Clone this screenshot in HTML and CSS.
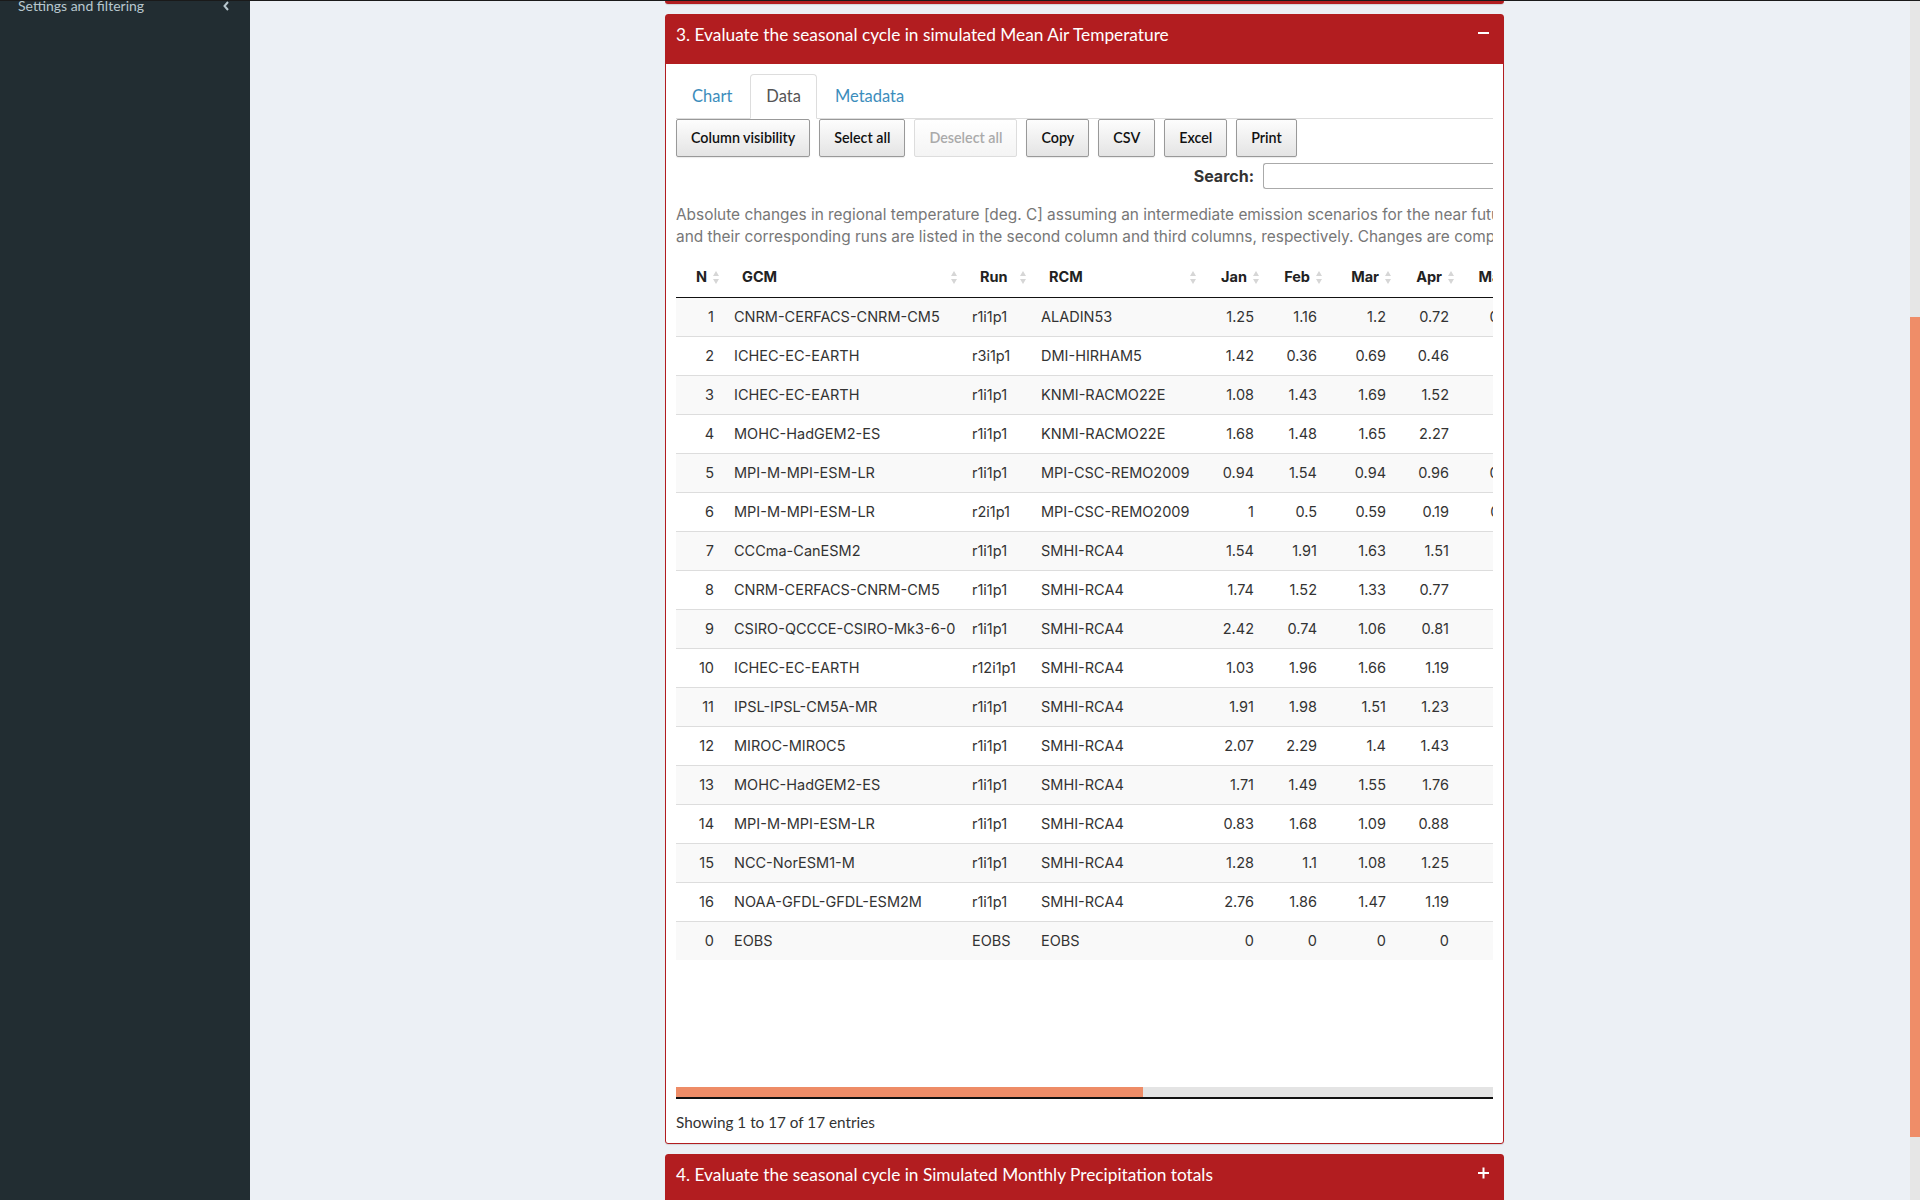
FILE: index.html
```html
<!DOCTYPE html>
<html lang="en">
<head>
<meta charset="utf-8">
<title>Seasonal cycle evaluation</title>
<link rel="stylesheet" href="styles.css">
</head>
<body>
<div class="app">
  <aside class="sidebar">
    <ul class="sidebar-menu">
      <li class="menu-item">
        <span class="menu-text">Settings and filtering</span>
        <svg class="chev" width="6" height="10" viewBox="0 0 6 10"><path d="M5 1 L1.5 5 L5 9" fill="none" stroke="#b8c7ce" stroke-width="2"/></svg>
      </li>
    </ul>
  </aside>

  <main class="content">
    <div class="column">
      <div class="box-prev"></div>

      <section class="box">
        <header class="box-header">
          <h3 class="box-title">3. Evaluate the seasonal cycle in simulated Mean Air Temperature</h3>
          <span class="box-tool"><svg width="11" height="16" viewBox="0 0 11 16"><rect x="0" y="7" width="11" height="2" fill="#fff"/></svg></span>
        </header>
        <div class="box-body">
          <ul class="nav-tabs">
            <li class="tab"><a>Chart</a></li>
            <li class="tab active"><a>Data</a></li>
            <li class="tab"><a>Metadata</a></li>
          </ul>

          <div class="dt-buttons">
            <span class="dt-button">Column visibility</span>
            <span class="dt-button">Select all</span>
            <span class="dt-button disabled">Deselect all</span>
            <span class="dt-button">Copy</span>
            <span class="dt-button">CSV</span>
            <span class="dt-button">Excel</span>
            <span class="dt-button">Print</span>
          </div>

          <div class="dt-filter">
            <label class="filter-label">Search:</label>
            <span class="filter-input"></span>
          </div>

          <div class="dt-scroll">
            <div class="dt-inner">
              <p class="dt-caption">Absolute changes in regional temperature [deg. C] assuming an intermediate emission scenarios for the near future (2021-2050) with respect to the reference period (1971-2000). Regional models are listed in the fourth column, while the driving GCMs<br>and their corresponding runs are listed in the second column and third columns, respectively. Changes are computed from the monthly means of each simulation.</p>
              <table class="dt">
                <colgroup>
                  <col class="c-n"><col class="c-gcm"><col class="c-run"><col class="c-rcm">
                  <col class="c-jan"><col class="c-feb"><col class="c-mar"><col class="c-apr"><col class="c-may">
                  <col class="c-m"><col class="c-m"><col class="c-m"><col class="c-m"><col class="c-m"><col class="c-m"><col class="c-m"><col class="c-ann">
                </colgroup>
                <thead>
                  <tr>
                    <th class="num"><div class="th-in"><span>N</span><i class="sort"></i></div></th>
                    <th><div class="th-in"><span>GCM</span><i class="sort"></i></div></th>
                    <th><div class="th-in"><span>Run</span><i class="sort"></i></div></th>
                    <th><div class="th-in"><span>RCM</span><i class="sort"></i></div></th>
                    <th class="num"><div class="th-in"><span>Jan</span><i class="sort"></i></div></th>
                    <th class="num"><div class="th-in"><span>Feb</span><i class="sort"></i></div></th>
                    <th class="num"><div class="th-in"><span>Mar</span><i class="sort"></i></div></th>
                    <th class="num"><div class="th-in"><span>Apr</span><i class="sort"></i></div></th>
                    <th class="num may"><div class="th-in"><span>May</span><i class="sort"></i></div></th>
                    <th class="num"><div class="th-in"><span>Jun</span><i class="sort"></i></div></th>
                    <th class="num"><div class="th-in"><span>Jul</span><i class="sort"></i></div></th>
                    <th class="num"><div class="th-in"><span>Aug</span><i class="sort"></i></div></th>
                    <th class="num"><div class="th-in"><span>Sep</span><i class="sort"></i></div></th>
                    <th class="num"><div class="th-in"><span>Oct</span><i class="sort"></i></div></th>
                    <th class="num"><div class="th-in"><span>Nov</span><i class="sort"></i></div></th>
                    <th class="num"><div class="th-in"><span>Dec</span><i class="sort"></i></div></th>
                    <th class="num"><div class="th-in"><span>Annual</span><i class="sort"></i></div></th>
                  </tr>
                </thead>
                <tbody>
                  <tr><td class="num">1</td><td>CNRM-CERFACS-CNRM-CM5</td><td>r1i1p1</td><td>ALADIN53</td><td class="num">1.25</td><td class="num">1.16</td><td class="num">1.2</td><td class="num">0.72</td><td class="num">0.85</td><td class="num">1.12</td><td class="num">1.31</td><td class="num">1.44</td><td class="num">1.17</td><td class="num">1.02</td><td class="num">0.98</td><td class="num">1.21</td><td class="num">1.11</td></tr>
                  <tr><td class="num">2</td><td>ICHEC-EC-EARTH</td><td>r3i1p1</td><td>DMI-HIRHAM5</td><td class="num">1.42</td><td class="num">0.36</td><td class="num">0.69</td><td class="num">0.46</td><td class="num">0.6</td><td class="num">0.83</td><td class="num">1.05</td><td class="num">1.21</td><td class="num">0.94</td><td class="num">0.88</td><td class="num">1.13</td><td class="num">1.36</td><td class="num">0.91</td></tr>
                  <tr><td class="num">3</td><td>ICHEC-EC-EARTH</td><td>r1i1p1</td><td>KNMI-RACMO22E</td><td class="num">1.08</td><td class="num">1.43</td><td class="num">1.69</td><td class="num">1.52</td><td class="num">1.3</td><td class="num">1.18</td><td class="num">1.27</td><td class="num">1.39</td><td class="num">1.24</td><td class="num">1.11</td><td class="num">1.35</td><td class="num">1.29</td><td class="num">1.32</td></tr>
                  <tr><td class="num">4</td><td>MOHC-HadGEM2-ES</td><td>r1i1p1</td><td>KNMI-RACMO22E</td><td class="num">1.68</td><td class="num">1.48</td><td class="num">1.65</td><td class="num">2.27</td><td class="num">2.1</td><td class="num">1.95</td><td class="num">2.31</td><td class="num">2.48</td><td class="num">2.12</td><td class="num">1.87</td><td class="num">1.76</td><td class="num">1.59</td><td class="num">1.94</td></tr>
                  <tr><td class="num">5</td><td>MPI-M-MPI-ESM-LR</td><td>r1i1p1</td><td>MPI-CSC-REMO2009</td><td class="num">0.94</td><td class="num">1.54</td><td class="num">0.94</td><td class="num">0.96</td><td class="num">0.82</td><td class="num">0.91</td><td class="num">1.08</td><td class="num">1.15</td><td class="num">0.97</td><td class="num">0.86</td><td class="num">1.02</td><td class="num">1.13</td><td class="num">1.03</td></tr>
                  <tr><td class="num">6</td><td>MPI-M-MPI-ESM-LR</td><td>r2i1p1</td><td>MPI-CSC-REMO2009</td><td class="num">1</td><td class="num">0.5</td><td class="num">0.59</td><td class="num">0.19</td><td class="num">0.67</td><td class="num">0.74</td><td class="num">0.92</td><td class="num">1.01</td><td class="num">0.85</td><td class="num">0.77</td><td class="num">0.69</td><td class="num">0.88</td><td class="num">0.74</td></tr>
                  <tr><td class="num">7</td><td>CCCma-CanESM2</td><td>r1i1p1</td><td>SMHI-RCA4</td><td class="num">1.54</td><td class="num">1.91</td><td class="num">1.63</td><td class="num">1.51</td><td class="num">1.4</td><td class="num">1.52</td><td class="num">1.73</td><td class="num">1.86</td><td class="num">1.62</td><td class="num">1.48</td><td class="num">1.57</td><td class="num">1.69</td><td class="num">1.63</td></tr>
                  <tr><td class="num">8</td><td>CNRM-CERFACS-CNRM-CM5</td><td>r1i1p1</td><td>SMHI-RCA4</td><td class="num">1.74</td><td class="num">1.52</td><td class="num">1.33</td><td class="num">0.77</td><td class="num">1.14</td><td class="num">1.08</td><td class="num">1.26</td><td class="num">1.37</td><td class="num">1.19</td><td class="num">1.05</td><td class="num">1.22</td><td class="num">1.41</td><td class="num">1.26</td></tr>
                  <tr><td class="num">9</td><td>CSIRO-QCCCE-CSIRO-Mk3-6-0</td><td>r1i1p1</td><td>SMHI-RCA4</td><td class="num">2.42</td><td class="num">0.74</td><td class="num">1.06</td><td class="num">0.81</td><td class="num">1.12</td><td class="num">1.25</td><td class="num">1.49</td><td class="num">1.63</td><td class="num">1.38</td><td class="num">1.24</td><td class="num">1.31</td><td class="num">1.72</td><td class="num">1.35</td></tr>
                  <tr><td class="num">10</td><td>ICHEC-EC-EARTH</td><td>r12i1p1</td><td>SMHI-RCA4</td><td class="num">1.03</td><td class="num">1.96</td><td class="num">1.66</td><td class="num">1.19</td><td class="num">1.2</td><td class="num">1.04</td><td class="num">1.15</td><td class="num">1.32</td><td class="num">1.09</td><td class="num">0.97</td><td class="num">1.28</td><td class="num">1.44</td><td class="num">1.28</td></tr>
                  <tr><td class="num">11</td><td>IPSL-IPSL-CM5A-MR</td><td>r1i1p1</td><td>SMHI-RCA4</td><td class="num">1.91</td><td class="num">1.98</td><td class="num">1.51</td><td class="num">1.23</td><td class="num">1.5</td><td class="num">1.67</td><td class="num">1.94</td><td class="num">2.13</td><td class="num">1.71</td><td class="num">1.55</td><td class="num">1.62</td><td class="num">1.85</td><td class="num">1.72</td></tr>
                  <tr><td class="num">12</td><td>MIROC-MIROC5</td><td>r1i1p1</td><td>SMHI-RCA4</td><td class="num">2.07</td><td class="num">2.29</td><td class="num">1.4</td><td class="num">1.43</td><td class="num">1.6</td><td class="num">1.48</td><td class="num">1.57</td><td class="num">1.66</td><td class="num">1.52</td><td class="num">1.39</td><td class="num">1.61</td><td class="num">1.98</td><td class="num">1.67</td></tr>
                  <tr><td class="num">13</td><td>MOHC-HadGEM2-ES</td><td>r1i1p1</td><td>SMHI-RCA4</td><td class="num">1.71</td><td class="num">1.49</td><td class="num">1.55</td><td class="num">1.76</td><td class="num">1.9</td><td class="num">2.04</td><td class="num">2.36</td><td class="num">2.51</td><td class="num">2.18</td><td class="num">1.92</td><td class="num">1.84</td><td class="num">1.66</td><td class="num">1.92</td></tr>
                  <tr><td class="num">14</td><td>MPI-M-MPI-ESM-LR</td><td>r1i1p1</td><td>SMHI-RCA4</td><td class="num">0.83</td><td class="num">1.68</td><td class="num">1.09</td><td class="num">0.88</td><td class="num">0.9</td><td class="num">0.95</td><td class="num">1.12</td><td class="num">1.23</td><td class="num">1.01</td><td class="num">0.89</td><td class="num">1.07</td><td class="num">1.18</td><td class="num">1.07</td></tr>
                  <tr><td class="num">15</td><td>NCC-NorESM1-M</td><td>r1i1p1</td><td>SMHI-RCA4</td><td class="num">1.28</td><td class="num">1.1</td><td class="num">1.08</td><td class="num">1.25</td><td class="num">1.1</td><td class="num">0.97</td><td class="num">1.04</td><td class="num">1.16</td><td class="num">1.03</td><td class="num">0.94</td><td class="num">1.09</td><td class="num">1.22</td><td class="num">1.11</td></tr>
                  <tr><td class="num">16</td><td>NOAA-GFDL-GFDL-ESM2M</td><td>r1i1p1</td><td>SMHI-RCA4</td><td class="num">2.76</td><td class="num">1.86</td><td class="num">1.47</td><td class="num">1.19</td><td class="num">1.3</td><td class="num">1.41</td><td class="num">1.62</td><td class="num">1.79</td><td class="num">1.53</td><td class="num">1.36</td><td class="num">1.58</td><td class="num">2.11</td><td class="num">1.62</td></tr>
                  <tr><td class="num">0</td><td>EOBS</td><td>EOBS</td><td>EOBS</td><td class="num">0</td><td class="num">0</td><td class="num">0</td><td class="num">0</td><td class="num">0</td><td class="num">0</td><td class="num">0</td><td class="num">0</td><td class="num">0</td><td class="num">0</td><td class="num">0</td><td class="num">0</td><td class="num">0</td></tr>
                </tbody>
              </table>
            </div>
          </div>
          <div class="hscroll"><div class="hthumb"></div></div>
          <div class="dt-info">Showing 1 to 17 of 17 entries</div>
        </div>
      </section>

      <section class="box">
        <header class="box-header">
          <h3 class="box-title">4. Evaluate the seasonal cycle in Simulated Monthly Precipitation totals</h3>
          <span class="box-tool"><svg width="11" height="16" viewBox="0 0 11 16"><rect x="0" y="7" width="11" height="2" fill="#fff"/><rect x="4.5" y="2.5" width="2" height="11" fill="#fff"/></svg></span>
        </header>
      </section>
    </div>
  </main>

  <div class="page-scroll"><div class="page-thumb"></div></div>
</div>
</body>
</html>
```

FILE: styles.css
```css
* { box-sizing: border-box; }

html, body {
  margin: 0;
  padding: 0;
  height: 1200px;
  overflow: hidden;
}

body {
  font-family: Lato, "Open Sans", sans-serif;
  color: #333;
  background: #ecf0f5;
}

.app {
  display: flex;
  height: 1200px;
  border-top: 1px solid #1a1a1a;
}

/* Sidebar */
.sidebar {
  width: 250px;
  flex: 0 0 250px;
  background: #222d32;
}

.sidebar-menu {
  list-style: none;
  margin: -5px 0 0;
  padding: 0;
}

.menu-item {
  display: flex;
  align-items: center;
  justify-content: space-between;
  padding: 0 21px 0 18px;
  line-height: 20px;
  font-size: 14px;
  color: #b8c7ce;
}

.chev { display: block; }

/* Main content */
.content {
  flex: 1 1 auto;
  background: #ecf0f5;
}

.column {
  width: 839px;
  margin-left: 415px;
}

.box-prev {
  height: 3px;
  background: #b21d20;
  border-radius: 0 0 3px 3px;
  box-shadow: 0 1px 1px rgba(0,0,0,0.12);
  margin-bottom: 10px;
}

.box {
  background: #fff;
  border: 1px solid #b21d20;
  border-radius: 3px;
  box-shadow: 0 1px 1px rgba(0,0,0,0.1);
  margin-bottom: 10px;
}

.box-header {
  display: flex;
  justify-content: space-between;
  align-items: flex-start;
  height: 49px;
  padding: 10px 10px 0 10px;
  background: #b21d20;
  color: #fff;
}

.box-title {
  margin: 0;
  font-size: 17.3px;
  font-weight: 400;
  line-height: 20px;
  font-family: Lato, sans-serif;
}

.box-tool {
  display: block;
  padding: 0 4px;
  height: 16px;
}
.box-tool svg { display: block; }

.box-body {
  padding: 10px 10px 10px 10px;
}

/* Tabs */
.nav-tabs {
  list-style: none;
  margin: 0;
  padding: 0;
  display: flex;
  border-bottom: 1px solid #ddd;
  height: 45px;
}

.tab {
  margin-bottom: -1px;
  margin-right: 2px;
}

.tab a {
  display: block;
  padding: 10px 15px;
  line-height: 23px;
  font-size: 16.5px;
  border: 1px solid transparent;
  border-radius: 4px 4px 0 0;
  color: #3c8dbc;
}

.tab.active a {
  color: #555;
  background: #fff;
  border-color: #ddd #ddd transparent;
}

/* Buttons */
.dt-buttons {
  display: flex;
  gap: 9px;
}

.dt-button {
  display: inline-block;
  padding: 7px 14px;
  line-height: 22px;
  font-size: 14.3px;
  font-weight: 600;
  color: #111;
  border: 1px solid #999;
  border-radius: 2px;
  background: linear-gradient(to bottom, #fdfdfd 0%, #e4e4e4 100%);
  box-shadow: 0 1px 1px rgba(0,0,0,0.08);
  white-space: nowrap;
}

.dt-button.disabled {
  color: #aaa;
  border-color: #ddd;
  background: linear-gradient(to bottom, #fff 0%, #f4f4f4 100%);
  box-shadow: none;
}

/* Search */
.dt-filter {
  display: flex;
  justify-content: flex-end;
  align-items: center;
  margin-top: 6px;
  gap: 9px;
}

.filter-label {
  font-family: Inter, sans-serif;
  font-weight: 700;
  font-size: 16px;
  color: #333;
}

.filter-input {
  display: block;
  width: 230px;
  height: 26px;
  border: 1px solid #aaa;
  border-right: none;
  border-radius: 3px 0 0 3px;
  background: #fff;
}

/* Table area */
.dt-scroll {
  margin-top: 15px;
  height: 883px;
  overflow: hidden;
}

.dt-inner {
  width: 1430px;
}

.dt-caption {
  margin: 0;
  font-family: Inter, sans-serif;
  font-size: 15.4px;
  line-height: 22px;
  color: #777;
  white-space: nowrap;
}

.dt {
  margin-top: 9px;
  width: 1430px;
  table-layout: fixed;
  border-collapse: separate;
  border-spacing: 0;
  font-family: Inter, sans-serif;
  font-size: 14.5px;
  color: #333;
}

.c-n { width: 48px; }
.c-gcm { width: 238px; }
.c-run { width: 69px; }
.c-rcm { width: 170px; }
.c-jan { width: 63px; }
.c-feb { width: 63px; }
.c-mar { width: 69px; }
.c-apr { width: 63px; }
.c-may { width: 71px; }
.c-m { width: 66px; }
.c-ann { width: 114px; }

.dt th {
  padding: 10px 5px 10px 18px;
  line-height: 20px;
  font-weight: 700;
  color: #222;
  border-bottom: 1px solid #111;
  text-align: left;
  white-space: nowrap;
}

.th-in {
  display: flex;
  align-items: center;
  justify-content: space-between;
}

.dt th.num .th-in {
  justify-content: flex-end;
  gap: 6px;
}

.dt th.may .th-in { gap: 10px; }

.sort {
  display: flex;
  flex-direction: column;
  gap: 3px;
}

.sort::before,
.sort::after {
  content: "";
  display: block;
  width: 0;
  height: 0;
  border-left: 3.5px solid transparent;
  border-right: 3.5px solid transparent;
}

.sort::before { border-bottom: 5px solid #d6d6d6; }
.sort::after { border-top: 5px solid #d6d6d6; }

.dt td {
  padding: 8px 10px;
  line-height: 22px;
  border-top: 1px solid #ddd;
  white-space: nowrap;
}

.dt tbody tr:first-child td { border-top: none; }
.dt tbody tr:nth-child(odd) td { background: #f9f9f9; }

.dt td.num { text-align: right; }

.hscroll {
  height: 12px;
  background: #e4e4e4;
  border-bottom: 2px solid #111;
}

.hthumb {
  width: 57.2%;
  height: 10px;
  background: #ee8c67;
}

.dt-info {
  margin-top: 12px;
  line-height: 22px;
  font-size: 15.3px;
  color: #333;
}

/* Page scrollbar */
.page-scroll {
  width: 10px;
  flex: 0 0 10px;
  background: #e6e6e6;
}

.page-thumb {
  margin-top: 316px;
  height: 820px;
  background: #ef8d68;
}
```
